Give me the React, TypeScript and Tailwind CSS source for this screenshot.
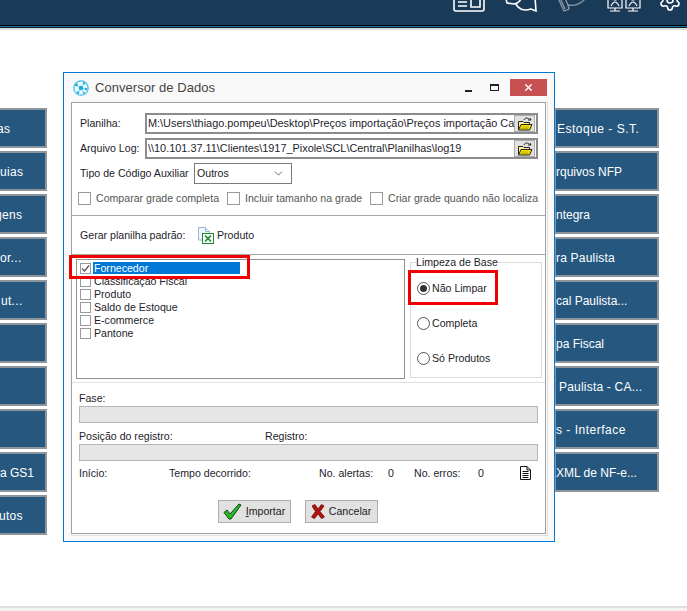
import React from "react";
import { ChevronDown, Settings, X } from "lucide-react";

const leftRows = [
  { label: "as", shift: "-ml-[3px] tracking-[0.3px]" },
  { label: "uias", shift: "ml-0 tracking-[0.3px]" },
  { label: "gens", shift: "-ml-[5px] tracking-[0.3px]" },
  { label: "or...", shift: "ml-0 tracking-[0.3px]" },
  { label: "ut...", shift: "ml-[1px] tracking-[0.3px]" },
  { label: "", shift: "ml-0" },
  { label: "", shift: "ml-0" },
  { label: "", shift: "ml-0" },
  { label: "ra GS1", shift: "-ml-[4px] tracking-normal" },
  { label: "utos", shift: "-ml-[1px] tracking-[0.3px]" },
];

const rightRows = [
  { label: "Estoque - S.T.", shift: "ml-[1px] tracking-[0.5px]" },
  { label: "rquivos NFP", shift: "ml-0 tracking-normal" },
  { label: "ntegra", shift: "ml-0 tracking-normal" },
  { label: "ra Paulista", shift: "ml-0 tracking-[0.2px]" },
  { label: "cal Paulista...", shift: "ml-0 tracking-normal" },
  { label: "pa Fiscal", shift: "ml-0 tracking-normal" },
  { label: "Paulista - CA...", shift: "ml-[3px] tracking-[0.2px]" },
  { label: "s - Interface", shift: "ml-0 tracking-[0.5px]" },
  { label: "XML de NF-e...", shift: "ml-0 tracking-normal" },
];

const listItems = ["Classificação Fiscal", "Produto", "Saldo de Estoque", "E-commerce", "Pantone"];

const FolderIcon = () => (
  <svg width="16" height="14" viewBox="0 0 16 14">
    <path d="M7 3 C8 0.5 11 0.5 12.5 2.5" fill="none" stroke="#222" strokeWidth="1" />
    <path d="M11 3 L14 3 L13 1" fill="none" stroke="#222" strokeWidth="1" />
    <path d="M1.5 13 V4.5 H6 L7 5.5 H12.5 V7" fill="#fff3a0" stroke="#222" strokeWidth="1" />
    <path d="M1.5 13 L4 7.5 H15 L12.5 13 Z" fill="#f6e400" stroke="#222" strokeWidth="1" />
    <path d="M4.5 10 H12 M3.5 11.5 H11" stroke="#a89a00" strokeWidth="0.7" />
  </svg>
);

const ExcelIcon = () => (
  <svg width="17" height="17" viewBox="0 0 17 17">
    <path d="M1.5 0.5 H8.5 L12.5 4.5 V13 H1.5 Z" fill="#f2f6fb" stroke="#9cb6d6" strokeWidth="1" />
    <path d="M8.5 0.5 V4.5 H12.5" fill="#dbe6f3" stroke="#9cb6d6" strokeWidth="1" />
    <rect x="5.5" y="6.5" width="11" height="10" fill="#fff" stroke="#1c8a2e" strokeWidth="1" />
    <path d="M8 8.5 L14 14.5 M14 8.5 L8 14.5" stroke="#1c8a2e" strokeWidth="1.7" />
  </svg>
);

const AppLogo = () => (
  <svg width="16" height="16" viewBox="0 0 16 16">
    <circle cx="8" cy="8" r="7.2" fill="#eafaff" stroke="#45bde6" strokeWidth="1.2" />
    <path d="M8 8 L3 5 M8 8 L11 3 M8 8 L13 9 M8 8 L5 13 M8 8 L11 13" stroke="#7dd5ef" strokeWidth="0.8" />
    <circle cx="8" cy="8" r="2.3" fill="#27a9dc" />
    <circle cx="3.5" cy="5" r="1.4" fill="#27a9dc" />
    <circle cx="11" cy="3.4" r="1.2" fill="#27a9dc" />
    <circle cx="13" cy="9" r="1.3" fill="#27a9dc" />
    <circle cx="5" cy="12.6" r="1.3" fill="#27a9dc" />
    <circle cx="10.8" cy="12.8" r="1" fill="#27a9dc" />
  </svg>
);

const DocIcon = () => (
  <svg width="11" height="14" viewBox="0 0 11 14">
    <path d="M0.5 0.5 H7 L10.5 4 V13.5 H0.5 Z" fill="#fff" stroke="#111" strokeWidth="1" />
    <path d="M7 0.5 V4 H10.5 M2.5 5.5 H8.5 M2.5 7.5 H8.5 M2.5 9.5 H8.5 M2.5 11.5 H8.5" fill="none" stroke="#111" strokeWidth="1" />
  </svg>
);

const GreenCheck = () => (
  <svg width="19" height="17" viewBox="0 0 19 17">
    <path d="M1 9.5 L4 7 L7 11 L16 1 L18 2 L8 16 L6 16 Z" fill="#2fb52f" stroke="#0a4a0a" strokeWidth="1" strokeLinejoin="round" />
  </svg>
);

const RedCross = () => (
  <svg width="14" height="15" viewBox="0 0 14 15">
    <path d="M1 2 L4 0.5 L7 5 L10.5 0.5 L13 2 L9 7.5 L13.5 13 L10.5 14.5 L7 10 L3.5 14.5 L0.5 13 L4.5 7.5 Z" fill="#b01010" stroke="#6e0808" strokeWidth="0.8" strokeLinejoin="round" />
  </svg>
);

const PathInput = ({ value }: { value: string }) => (
  <div className="flex h-[21px] w-[393px] items-center border-2 border-[#8c8c8c] pl-[1px] pr-[1px]">
    <span className="min-w-0 flex-1 overflow-hidden whitespace-nowrap text-[10.9px]">{value}</span>
    <span className="flex h-[17px] w-[21px] shrink-0 items-center justify-center border border-[#adadad] bg-[#e1e1e1]">
      <FolderIcon />
    </span>
  </div>
);

const Box = () => <span className="h-[13px] w-[13px] shrink-0 border border-[#9a9a9a] bg-white" />;

const ListBox = ({ checked }: { checked?: boolean }) => (
  <span className="flex h-[11px] w-[11px] shrink-0 items-center justify-center border border-[#9a9a9a] bg-white">
    {checked && (
      <svg width="9" height="9" viewBox="0 0 9 9" fill="none" stroke="#555" strokeWidth="1.3">
        <path d="M1 4.5 L3.5 7 L8 1.5" />
      </svg>
    )}
  </span>
);

const Radio = ({ label, selected }: { label: string; selected?: boolean }) => (
  <div className="flex h-[13px] items-center gap-[2px]">
    <span className="flex h-[13px] w-[13px] shrink-0 items-center justify-center rounded-full border border-[#555] bg-white">
      {selected && <span className="h-[7px] w-[7px] rounded-full bg-[#333]" />}
    </span>
    <span>{label}</span>
  </div>
);

const Bar = () => <div className="mx-[7px] h-[17px] w-[459px] border border-[#b5b5b5] bg-[#e6e6e6]" />;

const ActionButton = ({ children }: { children: React.ReactNode }) => (
  <button className="flex h-[23px] w-[73px] items-center justify-center gap-[4px] border border-[#adadad] bg-[#e1e1e1] text-[#222]">
    {children}
  </button>
);

export default function App() {
  return (
    <div className="flex h-[611px] w-[687px] flex-col overflow-hidden bg-white font-['Liberation_Sans',sans-serif]">
      <header className="shrink-0">
        <div className="flex h-[25px] items-start justify-end overflow-hidden bg-[#1a3b58] pr-[5px]">
          <div className="flex -translate-y-[12px] items-end gap-[20px] text-white">
            <svg width="32" height="23" viewBox="0 0 32 23" fill="none" stroke="currentColor" strokeWidth="1.6">
              <rect x="1" y="1" width="30" height="21" rx="2" />
              <path d="M5 9 H14 M5 13 H14 M5 17 H14 M18 9 H27 V18 H18 Z" />
            </svg>
            <svg width="32" height="23" viewBox="0 0 32 23" fill="none" stroke="currentColor" strokeWidth="1.6">
              <path d="M1 10 Q8 2 16 10 Q13 15 9 15 L2 14 Z" />
              <path d="M16 8 H30 L31 22 L26 20 Q20 22 16 20 Q12 18 11 15" />
            </svg>
            <svg className="-ml-[1px] text-[#8b98a4]" width="32" height="22" viewBox="0 0 32 22" fill="none" stroke="currentColor" strokeWidth="1.3">
              <path d="M2 8 L8 21 L13 19 L12 15 Q22 17 30 8" />
              <path d="M4 8 L9 19 M12 15 L8 6" />
            </svg>
            <svg className="-ml-[2px]" width="36" height="22" viewBox="0 0 36 22" fill="none" stroke="currentColor" strokeWidth="1.2">
              <path d="M2 3 H16 V18 H2 Z M20 3 H34 V18 H20 Z M9 18 V21 M27 18 V21 M4 21 H14 M22 21 H32" />
              <path d="M5 16 Q9 8 13 16 M23 16 Q27 8 31 16" />
              <circle cx="9" cy="8" r="2" />
              <circle cx="27" cy="8" r="2" />
            </svg>
            <Settings size={24} strokeWidth={1.6} className="-ml-[4px]" />
          </div>
        </div>
        <div className="h-[1px] bg-black" />
        <div className="h-[1px] bg-[#1f6fa8]" />
        <div className="h-[1px] bg-[#10202e]" />
        <div className="h-[2px] bg-[#dcdcdc]" />
      </header>

      <main className="relative flex-1 whitespace-nowrap text-[10.6px] text-[#1d1d2b]">
        <div className="flex items-start justify-between pr-[28px] pt-[78px]">
          <div className="flex w-[47px] flex-col gap-[3px]">
            {leftRows.map((row, i) => (
              <div
                key={i}
                className="flex h-[40px] items-center overflow-hidden whitespace-nowrap border-2 border-l-0 border-[#8d959c] bg-[#26587f] pt-[1px] text-[12px] text-white"
              >
                <span className={row.shift}>{row.label}</span>
              </div>
            ))}
          </div>
          <div className="flex w-[105px] flex-col gap-[3px]">
            {rightRows.map((row, i) => (
              <div
                key={i}
                className="flex h-[40px] items-center overflow-hidden whitespace-nowrap border-2 border-[#8d959c] bg-[#26587f] pt-[1px] text-[12px] text-white"
              >
                <span className={row.shift}>{row.label}</span>
              </div>
            ))}
          </div>
        </div>

        {/* modal */}
        <section className="absolute left-[63px] top-[42px] h-[470px] w-[492px] border border-[#0078d7] bg-[#f9f9f9] pl-[7px]">
          <div className="flex h-[29px] items-center pl-[2px]">
            <AppLogo />
            <span className="ml-[6px] text-[13px] tracking-[0.05px] text-[#444]">Conversor de Dados</span>
            <div className="ml-auto mr-[7px] flex items-center">
              <span className="mr-[18px] mt-[7px] h-[2px] w-[7px] bg-[#222]" />
              <span className="mr-[11px] h-[7px] w-[9px] border border-t-2 border-[#222]" />
              <span className="flex h-[17px] w-[37px] items-center justify-center bg-[#c75050] text-white">
                <X size={11} strokeWidth={3} />
              </span>
            </div>
          </div>

          <div className="relative h-[432px] w-[475px] border border-[#a0a0a0] bg-white">
            {/* top section */}
            <div className="h-[113px] border-b border-[#a8a8a8] pl-[8px] pt-[10px]">
              <div className="flex items-center">
                <span className="w-[65px]">Planilha:</span>
                <PathInput value="M:\Users\thiago.pompeu\Desktop\Preços importação\Preços importação Calç" />
              </div>
              <div className="mt-[4px] flex items-center">
                <span className="w-[65px]">Arquivo Log:</span>
                <PathInput value="\\10.101.37.11\Clientes\1917_Pixole\SCL\Central\Planilhas\log19" />
              </div>
              <div className="mt-[4px] flex items-center">
                <span className="w-[114px]">Tipo de Código Auxiliar</span>
                <div className="flex h-[21px] w-[98px] items-center justify-between border border-[#7a7a7a] pl-[2px] pr-[6px] text-[#222]">
                  Outros
                  <ChevronDown size={13} strokeWidth={1.2} />
                </div>
              </div>
              <div className="-ml-[2px] mt-[8px] flex h-[13px] items-center text-[#555]">
                <Box />
                <span className="ml-[5px] w-[131px]">Comparar grade completa</span>
                <Box />
                <span className="ml-[5px] w-[125px]">Incluir tamanho na grade</span>
                <Box />
                <span className="ml-[5px]">Criar grade quando não localiza</span>
              </div>
            </div>

            {/* template row */}
            <div className="flex h-[39px] items-center border-b border-[#a8a8a8] pl-[8px] pt-[1px]">
              <span className="w-[117px]">Gerar planilha padrão:</span>
              <ExcelIcon />
              <span className="ml-[3px]">Produto</span>
            </div>

            {/* list and radio group */}
            <div className="flex h-[128px] border-b border-[#e0e0e0] pl-[4px] pt-[4px]">
              <div className="h-[120px] w-[329px] border border-[#909090] pl-[3px] pt-[2px]">
                <div className="flex h-[13px] items-center">
                  <ListBox checked />
                  <span className="mb-[2px] ml-[2px] h-[12px] w-[147px] bg-[#0078d7] pl-[1px] leading-[12px] text-white">Fornecedor</span>
                </div>
                {listItems.map((item) => (
                  <div key={item} className="flex h-[13px] items-center">
                    <ListBox />
                    <span className="ml-[3px]">{item}</span>
                  </div>
                ))}
              </div>
              <fieldset className="ml-[5px] mt-[-3px] h-[122px] w-[132px] border border-[#dcdcdc] pl-[6px]">
                <legend className="-ml-[1px] px-0 leading-[13px]">Limpeza de Base</legend>
                <div className="flex flex-col gap-[22px] pt-[13px]">
                  <Radio label="Não Limpar" selected />
                  <Radio label="Completa" />
                  <Radio label="Só Produtos" />
                </div>
              </fieldset>
            </div>

            {/* progress */}
            <div className="pt-[8px]">
              <div className="pl-[7px] leading-[14px]">Fase:</div>
              <div className="mt-[1px]"><Bar /></div>
              <div className="mt-[6px] flex pl-[7px] leading-[14px]">
                <span className="w-[186px]">Posição do registro:</span>
                <span>Registro:</span>
              </div>
              <div className="mt-[1px]"><Bar /></div>
              <div className="mt-[5px] flex items-center pl-[7px] leading-[14px]">
                <span className="w-[90px]">Início:</span>
                <span className="w-[150px]">Tempo decorrido:</span>
                <span className="w-[69px]">No. alertas:</span>
                <span className="w-[26px]">0</span>
                <span className="w-[64px]">No. erros:</span>
                <span className="w-[42px]">0</span>
                <DocIcon />
              </div>
              <div className="mt-[20px] flex justify-center gap-[14px] pr-[22px]">
                <ActionButton>
                  <GreenCheck />
                  <span><span className="underline">I</span>mportar</span>
                </ActionButton>
                <ActionButton>
                  <RedCross />
                  <span>Cancelar</span>
                </ActionButton>
              </div>
            </div>

            {/* red annotations */}
            <div className="absolute left-[-3px] top-[152px] h-[24px] w-[181px] border-[3px] border-[#f00000]" />
            <div className="absolute left-[336px] top-[167px] h-[35px] w-[90px] border-[3px] border-[#f00000]" />
          </div>
          <div className="h-[2px] w-[477px] border-b border-[#e0e0e0]" />
          <div className="absolute left-[482px] top-[29px] h-[434px] w-[2px] border-r border-[#e0e0e0]" />
        </section>
      </main>

      <footer className="h-[5px] shrink-0 border-t-2 border-[#dedede] bg-[#f2f2f2]" />
    </div>
  );
}
